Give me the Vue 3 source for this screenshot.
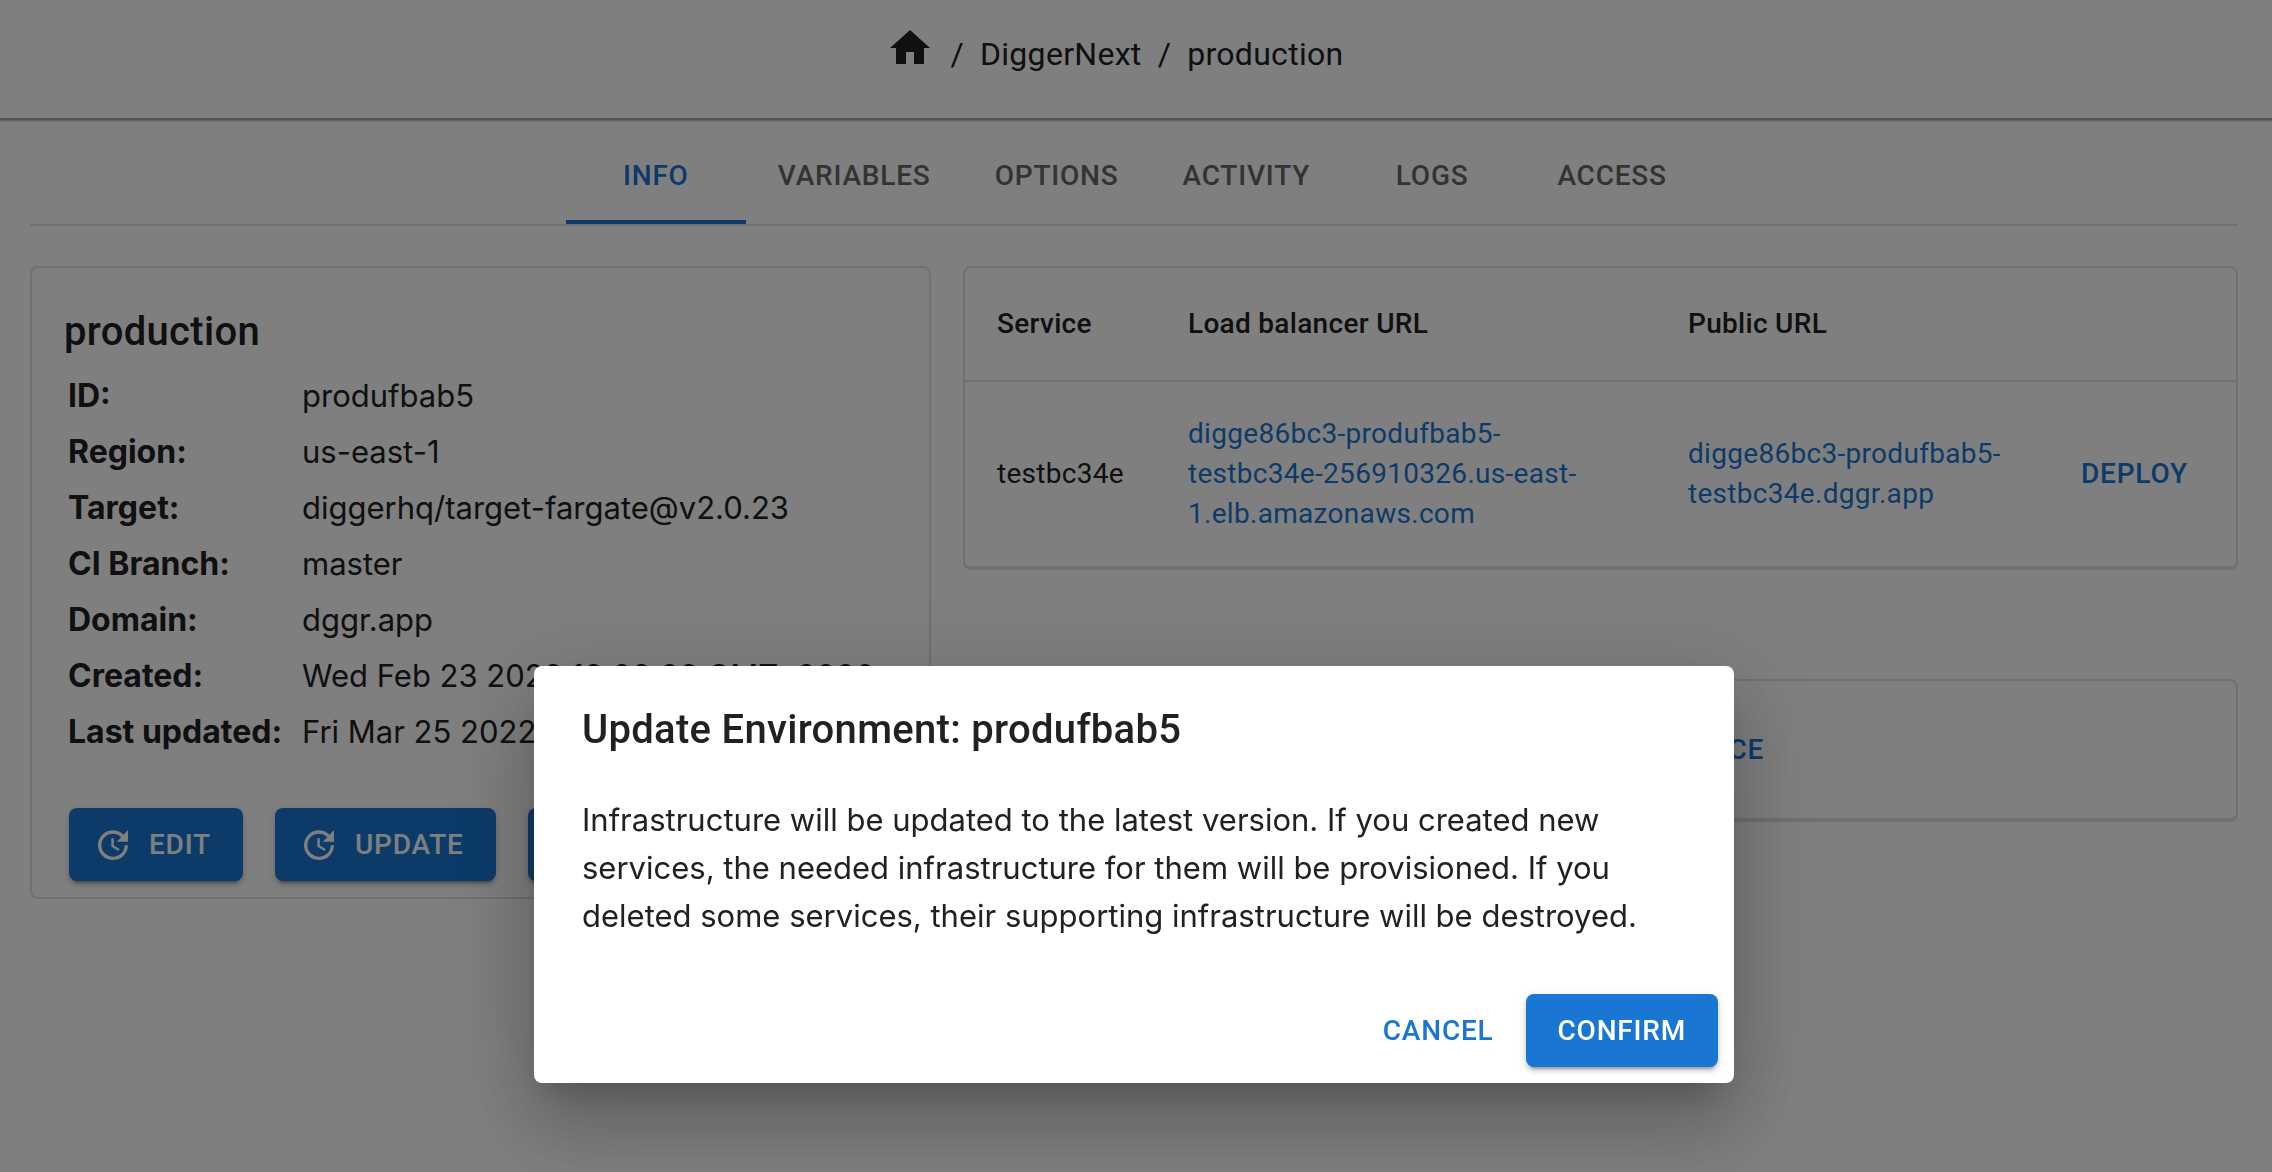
<script setup>
import { ref } from 'vue'

const tabs = ['Info', 'Variables', 'Options', 'Activity', 'Logs', 'Access']
const activeTab = ref('Info')

const details = [
  { label: 'ID', value: 'produfbab5' },
  { label: 'Region', value: 'us-east-1' },
  { label: 'Target', value: 'diggerhq/target-fargate@v2.0.23' },
  { label: 'CI Branch', value: 'master' },
  { label: 'Domain', value: 'dggr.app' },
  { label: 'Created', value: 'Wed Feb 23 2022 18:08:08 GMT+0000' },
  { label: 'Last updated', value: 'Fri Mar 25 2022 12:00:00 GMT+0000' },
]

const actions = ['Edit', 'Update', 'Destroy']

const services = [
  {
    name: 'testbc34e',
    loadBalancer: 'digge86bc3-produfbab5-testbc34e-256910326.us-east-1.elb.amazonaws.com',
    publicUrl: 'digge86bc3-produfbab5-testbc34e.dggr.app',
  },
]

const dialogOpen = ref(true)
</script>

<template>
  <div class="page">
    <header class="topbar">
      <nav aria-label="Breadcrumb">
        <ol class="crumbs">
          <li class="crumb-home">
            <a href="#" aria-label="Home">
              <svg viewBox="0 0 24 24" width="48" height="48"><path d="M10 20v-6h4v6h5v-8h3L12 3 2 12h3v8z" /></svg>
            </a>
          </li>
          <li aria-hidden="true">/</li>
          <li><a href="#">DiggerNext</a></li>
          <li aria-hidden="true">/</li>
          <li><a href="#">production</a></li>
        </ol>
      </nav>
    </header>

    <main class="content">
      <div class="tabs" role="tablist">
        <button
          v-for="tab in tabs"
          :key="tab"
          class="tab"
          :class="{ active: tab === activeTab }"
          role="tab"
          :aria-selected="tab === activeTab"
          @click="activeTab = tab"
        >{{ tab }}</button>
      </div>

      <div class="columns">
        <section class="card info">
          <h2 class="title">production</h2>
          <dl class="details">
            <template v-for="item in details" :key="item.label">
              <dt>{{ item.label }}:</dt>
              <dd>{{ item.value }}</dd>
            </template>
          </dl>
          <div class="actions">
            <button v-for="action in actions" :key="action" class="btn contained">
              <svg class="btn-icon" viewBox="0 0 24 24" width="40" height="40"><path d="M21 10.12h-6.78l2.74-2.82c-2.73-2.7-7.15-2.8-9.88-.1-2.73 2.71-2.73 7.08 0 9.79s7.15 2.71 9.88 0C18.32 15.65 19 14.08 19 12.1h2c0 1.98-.88 4.55-2.64 6.29-3.51 3.48-9.21 3.48-12.72 0-3.5-3.47-3.53-9.11-.02-12.58s9.14-3.47 12.65 0L21 3v7.12zM12.5 8v4.25l3.5 2.08-.72 1.21L11 13V8h1.5z" /></svg>
              {{ action }}
            </button>
          </div>
        </section>

        <div class="side">
          <section class="card">
            <table class="services">
              <colgroup>
                <col class="col-name" />
                <col />
                <col class="col-url" />
                <col class="col-action" />
              </colgroup>
              <thead>
                <tr>
                  <th scope="col">Service</th>
                  <th scope="col">Load balancer URL</th>
                  <th scope="col">Public URL</th>
                  <td></td>
                </tr>
              </thead>
              <tbody>
                <tr v-for="service in services" :key="service.name">
                  <td>{{ service.name }}</td>
                  <td><a href="#">{{ service.loadBalancer }}</a></td>
                  <td><a href="#">{{ service.publicUrl }}</a></td>
                  <td><button class="btn text">Deploy</button></td>
                </tr>
              </tbody>
            </table>
          </section>

          <section class="card create">
            <button class="btn text">Create a new service</button>
          </section>
        </div>
      </div>
    </main>

    <div v-if="dialogOpen" class="backdrop">
      <div class="dialog" role="dialog" aria-modal="true" aria-labelledby="dialog-title">
        <h2 id="dialog-title" class="dialog-title">Update Environment: produfbab5</h2>
        <p class="dialog-text">
          Infrastructure will be updated to the latest version. If you created new services, the
          needed infrastructure for them will be provisioned. If you deleted some services, their
          supporting infrastructure will be destroyed.
        </p>
        <div class="dialog-actions">
          <button class="btn text" @click="dialogOpen = false">Cancel</button>
          <button class="btn contained" @click="dialogOpen = false">Confirm</button>
        </div>
      </div>
    </div>
  </div>
</template>

<style>
body {
  margin: 0;
  background: #fff;
}
</style>

<style scoped>
.page {
  min-height: 100vh;
  box-sizing: border-box;
  font-family: Roboto, "Liberation Sans", sans-serif;
  font-size: 32px;
  line-height: 48px;
  color: #212121;
}

a {
  color: inherit;
  text-decoration: none;
}

button {
  font: inherit;
  border: 0;
  cursor: pointer;
}

.topbar {
  padding: 24px 42px 40px 0;
  border-bottom: 2px solid #aaa;
  box-shadow: 0 1px 2px rgba(0, 0, 0, 0.3);
}

.crumbs {
  display: flex;
  justify-content: center;
  align-items: flex-end;
  gap: 16px;
  margin: 0;
  padding: 0;
  letter-spacing: 0.00938em;
  list-style: none;
}

.crumb-home {
  padding-bottom: 6px;
}

.crumb-home a,
.crumb-home svg {
  display: block;
}

svg {
  fill: currentColor;
}

.content {
  padding: 8px 34px 40px 30px;
}

.tabs {
  display: flex;
  justify-content: center;
  border-bottom: 2px solid #e0e0e0;
}

.tab {
  box-sizing: border-box;
  min-width: 180px;
  height: 96px;
  padding: 4px 32px 0;
  border-bottom: 4px solid transparent;
  background: none;
  color: #666;
  font-size: 28px;
  font-weight: 500;
  line-height: 36px;
  letter-spacing: 0.02857em;
  text-transform: uppercase;
}

.tab.active {
  color: #1976d2;
  border-bottom-color: #1976d2;
}

.columns {
  display: flex;
  align-items: flex-start;
  gap: 32px;
  margin-top: 40px;
}

.card {
  box-sizing: border-box;
  border: 2px solid #e0e0e0;
  border-radius: 8px;
}

.info {
  flex: 0 0 901px;
  padding: 32px 32px 16px;
}

.title,
.dialog-title {
  margin: 0;
  font-size: 40px;
  font-weight: 500;
  line-height: 64px;
  letter-spacing: 0.0075em;
}

.details {
  display: grid;
  grid-template-columns: 234px 1fr;
  margin: 4px 0 48px 4px;
  font-family: Inter, sans-serif;
  line-height: 56px;
  white-space: nowrap;
}

.details dt {
  font-weight: 700;
}

.details dd {
  margin: 0;
  font-size: 31px;
}

.actions {
  display: flex;
  gap: 32px;
  padding-left: 5px;
}

.btn {
  display: inline-flex;
  align-items: center;
  justify-content: center;
  box-sizing: border-box;
  min-width: 128px;
  height: 73px;
  border-radius: 8px;
  font-family: Roboto, "Liberation Sans", sans-serif;
  font-size: 28px;
  font-weight: 500;
  letter-spacing: 0.02857em;
  text-transform: uppercase;
}

.btn.contained {
  padding: 0 32px;
  background: #1976d2;
  color: #fff;
  box-shadow: 0 6px 2px -4px rgba(0, 0, 0, 0.2), 0 4px 4px rgba(0, 0, 0, 0.14), 0 2px 10px rgba(0, 0, 0, 0.12);
}

.btn.text {
  padding: 0 16px;
  background: none;
  color: #1976d2;
}

.btn-icon {
  margin: 0 16px 0 -8px;
}

.side {
  flex: 1;
  min-width: 0;
}

.services {
  width: 100%;
  table-layout: fixed;
  border-collapse: separate;
  border-spacing: 0;
  font-size: 28px;
  line-height: 40px;
}

.col-name {
  width: 191px;
}

.col-url {
  width: 377px;
}

.col-action {
  width: 203px;
}

.services th,
.services td {
  padding: 32px;
  border-bottom: 2px solid #e0e0e0;
  text-align: left;
  letter-spacing: 0.01071em;
}

.services th {
  font-weight: 500;
  line-height: 48px;
}

.services td:last-child {
  padding-top: 0;
  padding-bottom: 0;
}

.services a {
  color: #1976d2;
}

.create {
  display: flex;
  justify-content: center;
  margin-top: 109px;
  padding: 32px;
  border-bottom-width: 4px;
}

.backdrop {
  position: fixed;
  inset: 0;
  padding: 666px 34px 0 30px;
  background: rgba(0, 0, 0, 0.5);
}

.dialog {
  max-width: 1200px;
  margin: 0 auto;
  border-radius: 8px;
  background: #fff;
  box-shadow: 0 22px 30px -14px rgba(0, 0, 0, 0.2), 0 48px 76px 6px rgba(0, 0, 0, 0.14), 0 18px 92px 16px rgba(0, 0, 0, 0.12);
}

.dialog-title {
  padding: 32px 48px;
}

.dialog-text {
  margin: 0;
  padding: 2px 48px 38px;
  font-family: Inter, sans-serif;
  font-size: 31px;
}

.dialog-actions {
  display: flex;
  justify-content: flex-end;
  gap: 16px;
  padding: 16px;
}
</style>
